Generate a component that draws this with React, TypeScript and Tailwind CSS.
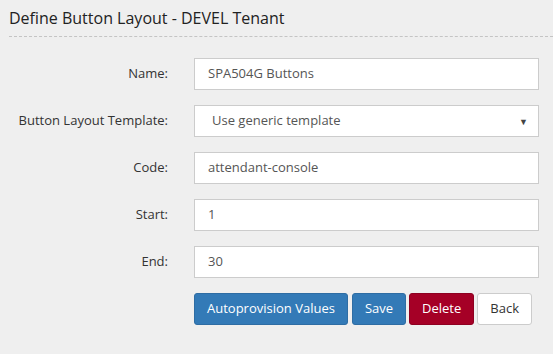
import React from "react";

const fields = [
  { label: "Name:", value: "SPA504G Buttons" },
  { label: "Button Layout Template:", value: "Use generic template", select: true },
  { label: "Code:", value: "attendant-console" },
  { label: "Start:", value: "1" },
  { label: "End:", value: "30" },
];

export default function App() {
  return (
    <div
      className="w-[553px] h-[354px] bg-[#efefef] text-[#333]"
      style={{ fontFamily: '"Open Sans", sans-serif' }}
    >
      <div className="pl-[9px]">
        <h1 className="pt-[7px] pb-[7px] text-[16px] leading-[22px] text-[#222] border-b border-dashed border-[#c4c4c4]">
          Define Button Layout - DEVEL Tenant
        </h1>
      </div>

      <div className="pt-[21px] flex flex-col gap-[15px]">
        {fields.map((f) => (
          <div key={f.label} className="flex items-center">
            <label className="w-[168px] text-right text-[13px] text-[#333]">{f.label}</label>
            <div className="ml-[26px] w-[345px] h-[32px] bg-white border border-[#cccccc] flex items-center pl-[13px] pr-[10px] text-[13px] text-[#555]">
              {f.select ? (
                <>
                  <span className="pl-[4px] flex-1">{f.value}</span>
                  <span className="text-[9px] text-[#444] leading-none">▼</span>
                </>
              ) : (
                <span>{f.value}</span>
              )}
            </div>
          </div>
        ))}

        <div className="flex ml-[194px]">
          <button className="h-[32px] px-[12px] rounded-[3px] bg-[#337ab7] border border-[#2e6da4] text-white text-[13px]">
            Autoprovision Values
          </button>
          <button className="ml-[4px] h-[32px] px-[12px] rounded-[3px] bg-[#337ab7] border border-[#2e6da4] text-white text-[13px]">
            Save
          </button>
          <button className="ml-[3px] h-[32px] px-[12px] rounded-[3px] bg-[#a50026] border border-[#8e0021] text-white text-[13px]">
            Delete
          </button>
          <button className="ml-[3px] h-[32px] px-[12px] rounded-[3px] bg-white border border-[#cccccc] text-[#333] text-[13px]">
            Back
          </button>
        </div>
      </div>
    </div>
  );
}
